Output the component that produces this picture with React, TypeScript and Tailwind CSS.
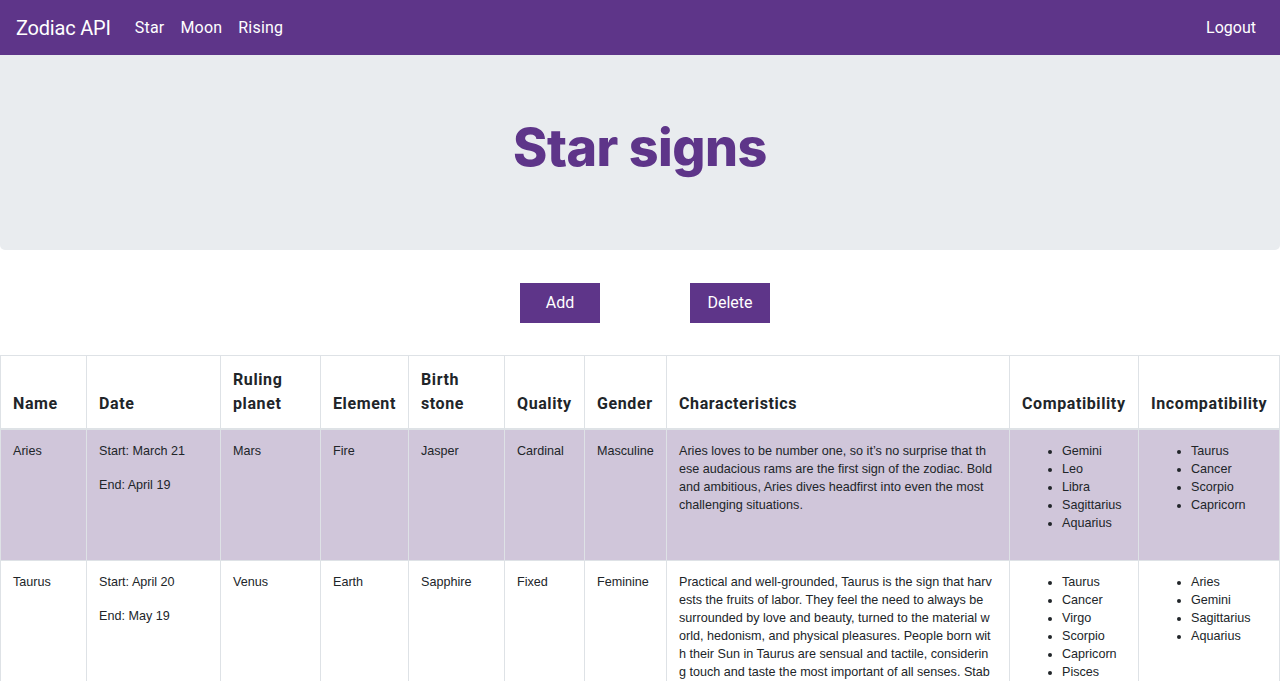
import React from "react";

type Sign = {
  name: string;
  start: string;
  end: string;
  planet: string;
  element: string;
  stone: string;
  quality: string;
  gender: string;
  text: string;
  compat: string[];
  incompat: string[];
};

const signs: Sign[] = [
  {
    name: "Aries",
    start: "March 21",
    end: "April 19",
    planet: "Mars",
    element: "Fire",
    stone: "Jasper",
    quality: "Cardinal",
    gender: "Masculine",
    text: "Aries loves to be number one, so it’s no surprise that these audacious rams are the first sign of the zodiac. Bold and ambitious, Aries dives headfirst into even the most challenging situations.",
    compat: ["Gemini", "Leo", "Libra", "Sagittarius", "Aquarius"],
    incompat: ["Taurus", "Cancer", "Scorpio", "Capricorn"],
  },
  {
    name: "Taurus",
    start: "April 20",
    end: "May 19",
    planet: "Venus",
    element: "Earth",
    stone: "Sapphire",
    quality: "Fixed",
    gender: "Feminine",
    text: "Practical and well-grounded, Taurus is the sign that harvests the fruits of labor. They feel the need to always be surrounded by love and beauty, turned to the material world, hedonism, and physical pleasures. People born with their Sun in Taurus are sensual and tactile, considering touch and taste the most important of all senses. Stable and conservative, this is one of the most reliable signs of the zodiac.",
    compat: ["Taurus", "Cancer", "Virgo", "Scorpio", "Capricorn", "Pisces"],
    incompat: ["Aries", "Gemini", "Sagittarius", "Aquarius"],
  },
];

const headers: { label: React.ReactNode; w: string }[] = [
  { label: "Name", w: "w-[86px]" },
  { label: "Date", w: "w-[134px]" },
  { label: <>Ruling<br />planet</>, w: "w-[100px]" },
  { label: "Element", w: "w-[88px]" },
  { label: <>Birth<br />stone</>, w: "w-[96px]" },
  { label: "Quality", w: "w-[80px]" },
  { label: "Gender", w: "w-[82px]" },
  { label: "Characteristics", w: "w-[343px]" },
  { label: "Compatibility", w: "w-[129px]" },
  { label: "Incompatibility", w: "w-[141px]" },
];

const td = "border border-[#dee2e6] p-3 align-top";

export default function App() {
  return (
    <div className="min-h-screen bg-white text-[#212529] font-['Roboto',sans-serif]">
      <nav className="h-[55px] bg-[#5e3589] flex items-center justify-between px-4 text-white">
        <div className="flex items-center">
          <span className="text-[20px] mr-6 tracking-[-0.2px]">Zodiac API</span>
          <a href="#" className="text-[16px] mr-[16px] tracking-[0.2px]">Star</a>
          <a href="#" className="text-[16px] mr-[16px] tracking-[0.2px]">Moon</a>
          <a href="#" className="text-[16px] tracking-[0.2px]">Rising</a>
        </div>
        <a href="#" className="text-[16px] mr-[8px]">Logout</a>
      </nav>

      <div className="h-[195px] bg-[#e9ecef] rounded-b-[5px] flex items-center justify-center pb-[9px]">
        <h1 className="text-[52px] font-extrabold text-[#5e3589] font-['Inter',sans-serif] tracking-[-0.5px]">
          Star signs
        </h1>
      </div>

      <div className="flex justify-center gap-[90px] mt-[33px] mb-[32px] pl-[10px]">
        <button className="w-20 h-10 bg-[#5e3589] text-white text-[16px]">Add</button>
        <button className="w-20 h-10 bg-[#5e3589] text-white text-[16px]">Delete</button>
      </div>

      <table className="table-fixed border-collapse w-[1280px] text-[12.6px] leading-[18px] font-['Liberation_Sans',sans-serif]">
        <thead>
          <tr>
            {headers.map((h, i) => (
              <th
                key={i}
                className={`${h.w} border border-[#dee2e6] border-b-2 p-3 align-bottom text-left text-[16px] leading-[24px] font-bold font-['Roboto',sans-serif] tracking-[0.6px]`}
              >
                {h.label}
              </th>
            ))}
          </tr>
        </thead>
        <tbody>
          {signs.map((s, i) => (
            <tr key={s.name} className={i % 2 === 0 ? "bg-[#d0c6da]" : "bg-white"}>
              <td className={td}>{s.name}</td>
              <td className={td}>
                <p className="mb-4">Start: {s.start}</p>
                <p className="mb-4">End: {s.end}</p>
              </td>
              <td className={td}>{s.planet}</td>
              <td className={td}>{s.element}</td>
              <td className={td}>{s.stone}</td>
              <td className={td}>{s.quality}</td>
              <td className={td}>{s.gender}</td>
              <td className={`${td} pr-[17px] break-all`}>{s.text}</td>
              <td className={td}>
                <ul className="list-disc pl-10 mb-4">
                  {s.compat.map((c) => (
                    <li key={c}>{c}</li>
                  ))}
                </ul>
              </td>
              <td className={td}>
                <ul className="list-disc pl-10 mb-4">
                  {s.incompat.map((c) => (
                    <li key={c}>{c}</li>
                  ))}
                </ul>
              </td>
            </tr>
          ))}
        </tbody>
      </table>
    </div>
  );
}
